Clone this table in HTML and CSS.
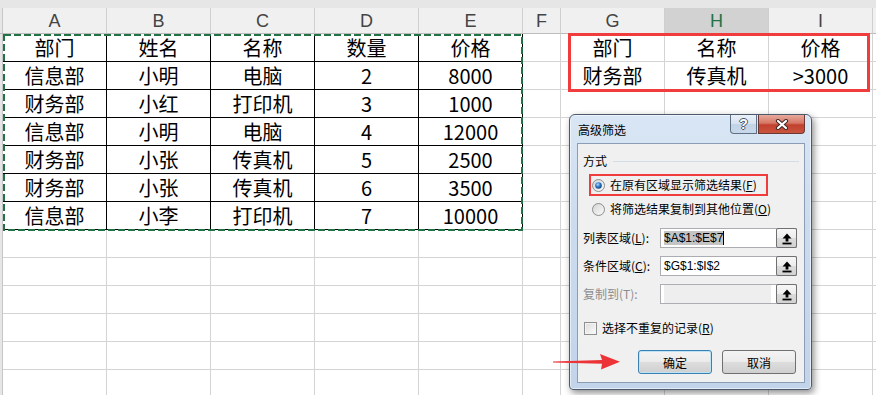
FILE: index.html
```html
<!DOCTYPE html>
<html lang="zh-CN">
<head>
<meta charset="utf-8">
<title>高级筛选</title>
<link rel="stylesheet" href="styles.css">
</head>
<body>
<div class="band"></div>
<div class="sheet">
  <div class="rh hdr"></div>
  <div class="hd">A</div><div class="hd">B</div><div class="hd">C</div><div class="hd">D</div><div class="hd">E</div><div class="hd">F</div><div class="hd">G</div><div class="hd sel">H</div><div class="hd">I</div><div class="hd fill"></div>

  <div class="rh"></div>
  <div class="c t">部门</div><div class="c t">姓名</div><div class="c t">名称</div><div class="c t">数量</div><div class="c t">价格</div><div class="c"></div><div class="c">部门</div><div class="c">名称</div><div class="c">价格</div><div class="c fill"></div>

  <div class="rh"></div>
  <div class="c t">信息部</div><div class="c t">小明</div><div class="c t">电脑</div><div class="c t">2</div><div class="c t">8000</div><div class="c"></div><div class="c">财务部</div><div class="c">传真机</div><div class="c">&gt;3000</div><div class="c fill"></div>

  <div class="rh"></div>
  <div class="c t">财务部</div><div class="c t">小红</div><div class="c t">打印机</div><div class="c t">3</div><div class="c t">1000</div><div class="c"></div><div class="c"></div><div class="c"></div><div class="c"></div><div class="c fill"></div>

  <div class="rh"></div>
  <div class="c t">信息部</div><div class="c t">小明</div><div class="c t">电脑</div><div class="c t">4</div><div class="c t">12000</div><div class="c"></div><div class="c"></div><div class="c"></div><div class="c"></div><div class="c fill"></div>

  <div class="rh"></div>
  <div class="c t">财务部</div><div class="c t">小张</div><div class="c t">传真机</div><div class="c t">5</div><div class="c t">2500</div><div class="c"></div><div class="c"></div><div class="c"></div><div class="c"></div><div class="c fill"></div>

  <div class="rh"></div>
  <div class="c t">财务部</div><div class="c t">小张</div><div class="c t">传真机</div><div class="c t">6</div><div class="c t">3500</div><div class="c"></div><div class="c"></div><div class="c"></div><div class="c"></div><div class="c fill"></div>

  <div class="rh"></div>
  <div class="c t">信息部</div><div class="c t">小李</div><div class="c t">打印机</div><div class="c t">7</div><div class="c t">10000</div><div class="c"></div><div class="c"></div><div class="c"></div><div class="c"></div><div class="c fill"></div>

  <div class="rh"></div>
  <div class="c"></div><div class="c"></div><div class="c"></div><div class="c"></div><div class="c"></div><div class="c"></div><div class="c"></div><div class="c"></div><div class="c"></div><div class="c fill"></div>
  <div class="rh"></div>
  <div class="c"></div><div class="c"></div><div class="c"></div><div class="c"></div><div class="c"></div><div class="c"></div><div class="c"></div><div class="c"></div><div class="c"></div><div class="c fill"></div>
  <div class="rh"></div>
  <div class="c"></div><div class="c"></div><div class="c"></div><div class="c"></div><div class="c"></div><div class="c"></div><div class="c"></div><div class="c"></div><div class="c"></div><div class="c fill"></div>
  <div class="rh"></div>
  <div class="c"></div><div class="c"></div><div class="c"></div><div class="c"></div><div class="c"></div><div class="c"></div><div class="c"></div><div class="c"></div><div class="c"></div><div class="c fill"></div>
  <div class="rh"></div>
  <div class="c"></div><div class="c"></div><div class="c"></div><div class="c"></div><div class="c"></div><div class="c"></div><div class="c"></div><div class="c"></div><div class="c"></div><div class="c fill"></div>
  <div class="rh"></div>
  <div class="c"></div><div class="c"></div><div class="c"></div><div class="c"></div><div class="c"></div><div class="c"></div><div class="c"></div><div class="c"></div><div class="c"></div><div class="c fill"></div>
</div>

<svg class="ants" width="520" height="197" viewBox="0 0 520 197">
  <rect x="1" y="1" width="518" height="195" fill="none" stroke="#217346" stroke-width="2" stroke-dasharray="7 3"/>
</svg>
<div class="mark-criteria"></div>

<div class="dlg">
  <div class="cap">
    <span class="cap-title">高级筛选</span>
    <div class="cap-btns">
      <div class="cb help">?</div>
      <div class="cb close">
        <svg width="14" height="11" viewBox="0 0 14 11">
          <path d="M3 2 L11 9 M11 2 L3 9" stroke="#3b2a28" stroke-width="4.2" stroke-linecap="round"/>
          <path d="M3 2 L11 9 M11 2 L3 9" stroke="#ffffff" stroke-width="2.2" stroke-linecap="round"/>
        </svg>
      </div>
    </div>
  </div>
  <div class="client">
    <div class="grp"><span>方式</span><i class="rule"></i></div>
    <div class="opt mark">
      <svg class="radio" width="13" height="13" viewBox="0 0 13 13">
        <defs>
          <linearGradient id="rg1" x1="0" y1="0" x2="1" y2="1"><stop offset="0" stop-color="#d4d4d4"/><stop offset="1" stop-color="#fcfcfc"/></linearGradient>
          <radialGradient id="rd" cx="0.4" cy="0.35" r="0.75"><stop offset="0" stop-color="#b5dcf8"/><stop offset="0.45" stop-color="#2f7cc9"/><stop offset="1" stop-color="#0a336f"/></radialGradient>
        </defs>
        <circle cx="6.5" cy="6.5" r="6" fill="url(#rg1)" stroke="#8b8c8c"/>
        <circle cx="6.5" cy="6.5" r="3.3" fill="url(#rd)"/>
      </svg>
      <span>在原有区域显示筛选结果(<u>F</u>)</span>
    </div>
    <div class="opt">
      <svg class="radio" width="13" height="13" viewBox="0 0 13 13">
        <defs>
          <linearGradient id="rg2" x1="0" y1="0" x2="1" y2="1"><stop offset="0" stop-color="#d4d4d4"/><stop offset="1" stop-color="#fcfcfc"/></linearGradient>
        </defs>
        <circle cx="6.5" cy="6.5" r="6" fill="url(#rg2)" stroke="#8b8c8c"/>
      </svg>
      <span>将筛选结果复制到其他位置(<u>O</u>)</span>
    </div>

    <div class="field first">
      <span class="lbl">列表区域(<u>L</u>):</span>
      <div class="ref">
        <span class="val"><span class="hl">$A$1:$E$7</span><span class="caret"></span></span>
        <span class="pick"><svg width="12" height="13" viewBox="0 0 12 13"><polygon points="6,1.5 10.5,6.5 7.4,6.5 7.4,9.5 4.6,9.5 4.6,6.5 1.5,6.5" fill="#000"/><rect x="1.5" y="10.6" width="9" height="1.8" fill="#000"/></svg></span>
      </div>
    </div>
    <div class="field">
      <span class="lbl">条件区域(<u>C</u>):</span>
      <div class="ref">
        <span class="val">$G$1:$I$2</span>
        <span class="pick"><svg width="12" height="13" viewBox="0 0 12 13"><polygon points="6,1.5 10.5,6.5 7.4,6.5 7.4,9.5 4.6,9.5 4.6,6.5 1.5,6.5" fill="#000"/><rect x="1.5" y="10.6" width="9" height="1.8" fill="#000"/></svg></span>
      </div>
    </div>
    <div class="field off">
      <span class="lbl">复制到(T):</span>
      <div class="ref">
        <span class="val"></span>
        <span class="pick"><svg width="12" height="13" viewBox="0 0 12 13"><polygon points="6,1.5 10.5,6.5 7.4,6.5 7.4,9.5 4.6,9.5 4.6,6.5 1.5,6.5" fill="#000"/><rect x="1.5" y="10.6" width="9" height="1.8" fill="#000"/></svg></span>
      </div>
    </div>

    <div class="chk"><span class="box"></span><span>选择不重复的记录(<u>R</u>)</span></div>

    <div class="btns">
      <button class="btn def">确定</button>
      <button class="btn">取消</button>
    </div>
  </div>
</div>

<svg class="arrow" width="75" height="24" viewBox="0 0 75 24">
  <polygon points="3,11.4 52,10 50,4 70,11.8 51,19.5 52,13.8 3,12.6" fill="#ec3338"/>
</svg>
</body>
</html>
```
FILE: styles.css
```css
* { box-sizing: border-box; }
html, body { margin: 0; padding: 0; }
body {
  width: 876px;
  height: 395px;
  overflow: hidden;
  position: relative;
  background: #ffffff;
  font-family: "Noto Sans CJK SC", sans-serif;
}

.band { height: 8px; background: #e6e6e6; }

.sheet {
  display: grid;
  grid-template-columns: 3px repeat(5, 104px) 38px repeat(3, 104px) 1fr;
  grid-template-rows: 26px repeat(13, 28px);
}

.hd {
  background: #f0f0f0;
  border-right: 1px solid #cfcfcf;
  border-bottom: 1px solid #bcbcbc;
  font: 18px "Liberation Sans", sans-serif;
  color: #444444;
  display: flex;
  align-items: center;
  justify-content: center;
  padding-top: 2px;
}
.hd.sel { background: #d2d2d2; color: #217346; }
.hd.fill { border-right: none; }

.rh { background: #e6e6e6; border-right: 1px solid #c6c6c6; }
.rh.hdr { border-bottom: 1px solid #bcbcbc; }

.c {
  border-right: 1px solid #d4d4d4;
  border-bottom: 1px solid #d4d4d4;
  display: flex;
  align-items: center;
  justify-content: center;
  font-size: 20px;
  line-height: 1;
  color: #000000;
}
.c.t { border-color: #000000; }
.c.fill { border-right: none; }

.ants { position: absolute; left: 3px; top: 34px; }

.mark-criteria {
  position: absolute;
  left: 568px;
  top: 33px;
  width: 302px;
  height: 59px;
  border: 3px solid #f03c3c;
}

/* dialog */
.dlg {
  position: absolute;
  left: 569px;
  top: 114px;
  width: 243px;
  height: 276px;
  border: 1px solid #4c5a6c;
  border-radius: 6px 6px 4px 4px;
  background: linear-gradient(#d9e6f5 0%, #cbdcef 40%, #c2d4ea 100%);
  box-shadow: inset 0 0 0 1px rgba(255,255,255,0.55), 2px 3px 7px rgba(0,0,0,0.45);
  padding: 0 6px 6px 7px;
  display: flex;
  flex-direction: column;
  font-size: 12px;
  color: #000;
}
.cap {
  height: 28px;
  display: flex;
  justify-content: space-between;
  align-items: flex-start;
  padding-left: 1px;
}
.cap-title { margin-top: 8px; font-size: 12px; line-height: 14px; }
.cap-btns { display: flex; gap: 1px; }
.cb {
  height: 19px;
  border: 1px solid #5f6f84;
  border-top: none;
  display: flex;
  align-items: center;
  justify-content: center;
}
.help {
  width: 27px;
  border-radius: 0 0 0 4px;
  background: linear-gradient(#e9f0f8 0%, #d6e2ef 50%, #c2d3e6 51%, #c9d9ec 100%);
  font: bold 14px "Liberation Sans", sans-serif;
  color: #ffffff;
  text-shadow: 1px 0 #46566a, -1px 0 #46566a, 0 1px #46566a, 0 -1px #46566a;
}
.close {
  width: 47px;
  border-color: #6b3934;
  border-radius: 0 0 4px 0;
  background: linear-gradient(#e7a99c 0%, #d67765 45%, #c2402d 55%, #c9553f 100%);
}

.client {
  flex: 1;
  border: 1px solid #8c9eb6;
  background: #f0f0f0;
  display: flex;
  flex-direction: column;
}
.grp {
  margin-top: 10px;
  height: 14px;
  padding-left: 5px;
  display: flex;
  align-items: center;
  gap: 6px;
  line-height: 14px;
}
.rule { flex: 1; height: 1px; background: #d3dde6; margin-right: 5px; margin-top: 1px; }

.opt {
  align-self: flex-start;
  margin-left: 11px;
  height: 22px;
  border: 2px solid transparent;
  padding: 0 9px 0 1px;
  display: flex;
  align-items: center;
  gap: 5px;
  line-height: 14px;
}
.opt.mark { margin-top: 6px; border-color: #f03c3c; }
.opt + .opt { margin-top: 2px; }
.radio { display: block; flex: none; }

.field {
  margin-top: 8px;
  height: 20px;
  padding-left: 5px;
  display: flex;
  align-items: center;
  line-height: 14px;
}
.field.first { margin-top: 8px; }
.lbl { width: 77px; flex: none; }
.ref {
  width: 137px;
  height: 20px;
  border: 1px solid #abadb3;
  background: #ffffff;
  display: flex;
  align-items: stretch;
}
.val {
  flex: 1;
  padding-left: 3px;
  display: flex;
  align-items: center;
  font: 12px "Liberation Sans", sans-serif;
}
.hl { background: #c4c4c4; line-height: 14px; }
.caret { width: 1px; height: 14px; background: #000; }
.pick {
  width: 21px;
  margin: -1px -1px -1px 0;
  border: 1px solid #707070;
  border-radius: 2px;
  background: linear-gradient(#f7f7f7 0%, #ececec 50%, #dcdcdc 51%, #d2d2d2 100%);
  display: flex;
  align-items: center;
  justify-content: center;
}
.off .lbl { color: #8d8d8d; }
.off .val { margin: 0 5px 0 3px; background: #eeeeee; }

.chk {
  margin-top: 17px;
  height: 14px;
  padding-left: 6px;
  display: flex;
  align-items: center;
  gap: 5px;
  line-height: 14px;
}
.box {
  width: 13px;
  height: 13px;
  border: 1px solid #8e8f8f;
  background: linear-gradient(135deg, #dcdcdc, #fbfbfb);
  box-shadow: inset 0 0 0 1px #f4f4f4;
}

.btns {
  margin-top: 15px;
  padding-right: 8px;
  display: flex;
  justify-content: flex-end;
  gap: 10px;
}
.btn {
  width: 74px;
  height: 24px;
  padding: 0;
  border: 1px solid #707070;
  border-radius: 3px;
  background: linear-gradient(#f3f3f3 0%, #ebebeb 50%, #dddddd 51%, #cfcfcf 100%);
  font: 12px "Noto Sans CJK SC", sans-serif;
  color: #000;
}
.btn.def {
  border-color: #3c7fb1;
  box-shadow: inset 0 0 0 1px #bde3f7;
}

.arrow { position: absolute; left: 550px; top: 350px; }
```
